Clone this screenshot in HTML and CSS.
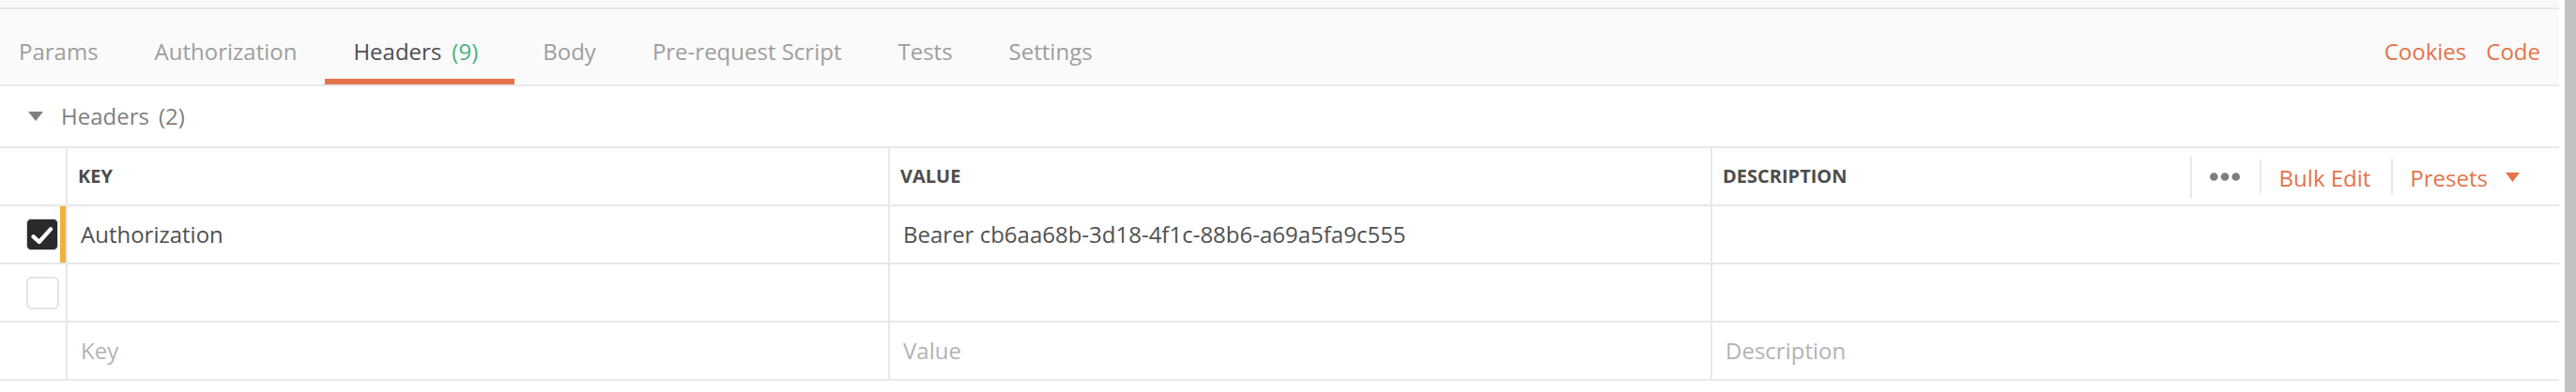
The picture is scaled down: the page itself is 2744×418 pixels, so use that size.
FILE: index.html
```html
<!DOCTYPE html>
<html lang="en">
<head>
<meta charset="utf-8">
<title>Headers</title>
<link rel="stylesheet" href="styles.css">
</head>
<body>
<div class="app">
  <div class="main">
    <div class="topstrip"></div>
    <div class="tabbar">
      <div class="tabs">
        <div class="tab">Params</div>
        <div class="tab">Authorization</div>
        <div class="tab active">Headers<span class="count">(9)</span></div>
        <div class="tab">Body</div>
        <div class="tab">Pre-request Script</div>
        <div class="tab">Tests</div>
        <div class="tab">Settings</div>
      </div>
      <div class="links">
        <span>Cookies</span>
        <span>Code</span>
      </div>
    </div>
    <div class="section">
      <svg class="caret" viewBox="0 0 16 10"><polygon points="0,0 16,0 8,10" fill="#808080"/></svg>
      <span>Headers</span><span class="section-count">(2)</span>
    </div>
    <div class="table">
      <div class="row header">
        <div class="check-cell"></div>
        <div class="cell head">KEY</div>
        <div class="cell head">VALUE</div>
        <div class="cell head desc">
          <span>DESCRIPTION</span>
          <div class="actions">
            <span class="sep tall"></span>
            <span class="dots"><svg viewBox="0 0 32 9" width="32" height="9"><circle cx="4.3" cy="4.5" r="4.3" fill="#7d7d7d"/><circle cx="16" cy="4.5" r="4.3" fill="#7d7d7d"/><circle cx="27.7" cy="4.5" r="4.3" fill="#7d7d7d"/></svg></span>
            <span class="sep"></span>
            <span class="action bulk">Bulk Edit</span>
            <span class="sep mid"></span>
            <span class="action presets">Presets<svg class="drop" viewBox="0 0 15 10" width="15" height="10"><polygon points="0,0 15,0 7.5,10" fill="#e5734a"/></svg></span>
          </div>
        </div>
      </div>
      <div class="row edited">
        <div class="check-cell"><span class="box checked"><svg viewBox="0 0 34 34" width="32" height="32"><path d="M7 19.5 L13.5 25.5 L26.5 11" fill="none" stroke="#fff" stroke-width="4.6" stroke-linecap="round" stroke-linejoin="round"/></svg></span></div>
        <div class="cell">Authorization</div>
        <div class="cell">Bearer cb6aa68b-3d18-4f1c-88b6-a69a5fa9c555</div>
        <div class="cell"></div>
      </div>
      <div class="row">
        <div class="check-cell"><span class="box"></span></div>
        <div class="cell"></div>
        <div class="cell"></div>
        <div class="cell"></div>
      </div>
      <div class="row">
        <div class="check-cell"></div>
        <div class="cell placeholder">Key</div>
        <div class="cell placeholder">Value</div>
        <div class="cell placeholder">Description</div>
      </div>
    </div>
  </div>
  <div class="scroll"><div class="thumb"></div></div>
</div>
</body>
</html>
```

FILE: styles.css
```css
* { box-sizing: border-box; }

html, body {
  margin: 0;
  padding: 0;
  background: #ffffff;
}

body {
  font-family: "Open Sans", "Noto Sans", sans-serif;
  font-size: 24px;
  color: #505050;
  width: 2744px;
  height: 418px;
  overflow: hidden;
}

.app {
  display: flex;
  height: 418px;
}

.main {
  flex: 1;
  min-width: 0;
}

.scroll {
  width: 18px;
  display: flex;
  justify-content: flex-end;
  background: #ffffff;
}

.thumb {
  width: 12px;
  background: #c1c1c1;
}

.topstrip {
  height: 10px;
  background: #f8f8f8;
  border-bottom: 2px solid #e8e8e8;
}

.tabbar {
  height: 82px;
  background: #fafafa;
  border-bottom: 2px solid #e8e8e8;
  display: flex;
  justify-content: space-between;
}

.tabs {
  display: flex;
}

.tab {
  height: 80px;
  padding: 15px 30px 0;
  border-bottom: 6px solid transparent;
  display: flex;
  align-items: center;
  color: #9e9e9e;
  line-height: 36px;
  white-space: nowrap;
}

.tab:first-child {
  padding-left: 20px;
}

.tab.active {
  color: #4f4f4f;
  border-bottom-color: #e5734a;
}

.count {
  color: #4cb382;
  margin-left: 11px;
  margin-right: 9px;
}

.links {
  display: flex;
  align-items: center;
  gap: 21px;
  height: 80px;
  padding: 15px 20px 6px 0;
  color: #e5734a;
  line-height: 36px;
}

.section {
  height: 64px;
  display: flex;
  align-items: center;
  padding-left: 30px;
  color: #7f7f7f;
  line-height: 36px;
}

.section-count {
  margin-left: 10px;
}

.caret {
  width: 16px;
  height: 10px;
  margin-right: 19px;
}

.table {
  border-top: 2px solid #e8e8e8;
}

.row {
  display: grid;
  grid-template-columns: 70px 876px 876px 1fr;
  height: 62px;
  border-bottom: 2px solid #e8e8e8;
  line-height: 36px;
}

.check-cell {
  display: flex;
  align-items: center;
  justify-content: flex-end;
  border-right: 6px solid transparent;
  padding-right: 1px;
}

.row.edited .check-cell {
  border-right-color: #f2b13b;
}

.cell {
  display: flex;
  align-items: center;
  padding-left: 14px;
  border-left: 2px solid #e8e8e8;
  min-width: 0;
  white-space: nowrap;
  overflow: hidden;
}

.head {
  font-weight: 700;
  font-size: 20px;
  color: #4d4d4d;
  padding-left: 11px;
}

.desc {
  justify-content: space-between;
  padding-right: 42px;
}

.actions {
  display: flex;
  align-items: center;
  height: 100%;
  font-weight: 400;
  font-size: 24px;
}

.sep {
  width: 2px;
  height: 36px;
  background: #e8e8e8;
}

.sep.tall {
  height: 44px;
  margin-top: 2px;
}

.sep.mid {
  height: 39px;
}

.dots {
  display: flex;
  align-items: center;
  padding: 0 21px 0 19px;
}

.action {
  display: flex;
  align-items: center;
  color: #e5734a;
  padding-top: 4px;
}

.bulk {
  padding-left: 19px;
  padding-right: 22px;
}

.presets {
  padding-left: 18px;
}

.drop {
  margin-left: 19px;
  margin-top: -2px;
}

.box {
  width: 35px;
  height: 35px;
  border: 2px solid #e4e4e4;
  border-radius: 6px;
  background: #ffffff;
  display: flex;
  align-items: center;
  justify-content: center;
}

.box.checked {
  width: 34px;
  height: 34px;
  border: 1px solid #d9d9d9;
  border-radius: 5px;
  background: #2a2a2a;
  margin-right: 1px;
}

.placeholder {
  color: #b3b3b3;
}
```
